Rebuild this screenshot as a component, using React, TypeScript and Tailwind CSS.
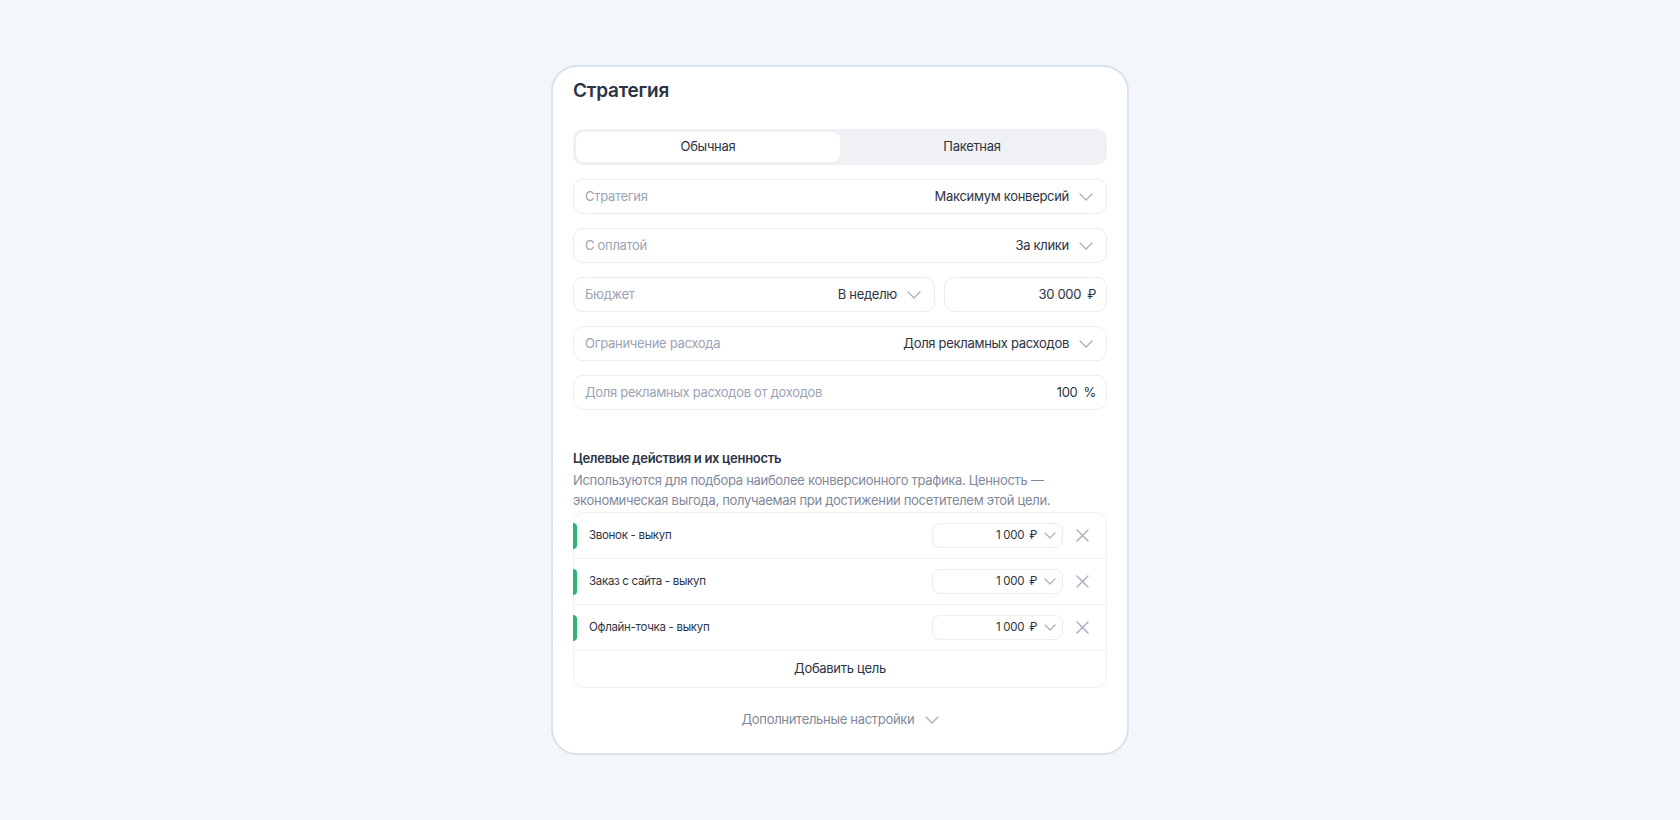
import React from "react";

function Chevron({ className = "" }: { className?: string }) {
  return (
    <svg className={className} width="14" height="8" viewBox="0 0 14 8" fill="none">
      <path d="M1 1l6 6 6-6" stroke="#a6aebd" strokeWidth="1.3" strokeLinecap="round" strokeLinejoin="round" />
    </svg>
  );
}

function SmallChevron() {
  return (
    <svg width="12" height="7" viewBox="0 0 12 7" fill="none">
      <path d="M1 1l5 5 5-5" stroke="#a6aebd" strokeWidth="1.2" strokeLinecap="round" strokeLinejoin="round" />
    </svg>
  );
}

function Cross() {
  return (
    <svg width="13" height="13" viewBox="0 0 13 13" fill="none">
      <path d="M1 1l11 11M12 1L1 12" stroke="#a4abba" strokeWidth="1.4" strokeLinecap="round" />
    </svg>
  );
}

function SelectField({ label, value }: { label: string; value: string }) {
  return (
    <div className="flex h-[35px] items-center justify-between rounded-[10px] border border-[#e9ecf1] pl-[11px] pr-[13px]">
      <span className="text-[13px] text-[#9ba3b4]">{label}</span>
      <span className="flex items-center gap-[10px] text-[13px] text-[#2c3344]">
        {value}
        <Chevron />
      </span>
    </div>
  );
}

function GoalRow({ name }: { name: string }) {
  return (
    <div className="flex h-[46px] items-center border-b border-[#f0f2f5] pr-[17px]">
      <div className="-ml-px h-[26px] w-[4px] rounded-r-full bg-[#2bb673]" />
      <span className="ml-[12px] flex-1 text-[11.5px] text-[#2c3344]">{name}</span>
      <div className="flex h-[25px] w-[131px] items-center justify-end rounded-[8px] border border-[#e9ecf1] pr-[6px]">
        <span className="text-[11.5px] text-[#2c3344]">1 000</span>
        <span className="ml-[5px] text-[11.5px] text-[#2c3344]">₽</span>
        <span className="ml-[7px] flex items-center">
          <SmallChevron />
        </span>
      </div>
      <div className="ml-[13px] flex items-center">
        <Cross />
      </div>
    </div>
  );
}

export default function App() {
  return (
    <div className="flex h-screen w-full items-center justify-center bg-[#f4f7fa] font-['Inter',sans-serif] tracking-[-0.3px]">
      <div className="flex w-[578px] flex-col rounded-[26px] border-2 border-[#dce2ed] bg-white px-5 pb-[23px] pt-[10px]">
        <h1 className="text-[19px] font-semibold leading-[28px] tracking-[-0.2px] text-[#2c3344]">Стратегия</h1>

        <div className="mt-[24px] grid h-[36px] grid-cols-2 rounded-[10px] bg-[#eff1f5] p-[3px]">
          <div className="flex items-center justify-center rounded-[8px] bg-white text-[13px] text-[#2c3344]">
            Обычная
          </div>
          <div className="flex items-center justify-center text-[13px] text-[#2c3344]">Пакетная</div>
        </div>

        <div className="mt-[14px] flex flex-col gap-[14px]">
          <SelectField label="Стратегия" value="Максимум конверсий" />
          <SelectField label="С оплатой" value="За клики" />
          <div className="flex gap-[9px]">
            <div className="flex-1">
              <SelectField label="Бюджет" value="В неделю" />
            </div>
            <div className="flex h-[35px] w-[163px] items-center justify-end rounded-[10px] border border-[#e9ecf1] pr-[10px] text-[13px] text-[#2c3344]">
              <span>30 000</span>
              <span className="ml-[6px]">₽</span>
            </div>
          </div>
          <SelectField label="Ограничение расхода" value="Доля рекламных расходов" />
          <div className="flex h-[35px] items-center justify-between rounded-[10px] border border-[#e9ecf1] pl-[11px] pr-[10px]">
            <span className="text-[13px] text-[#9ba3b4]">Доля рекламных расходов от доходов</span>
            <span className="flex items-center text-[13px] text-[#2c3344]">
              <span>100</span>
              <span className="ml-[6px]">%</span>
            </span>
          </div>
        </div>

        <div className="mt-[38px] text-[13px] font-semibold leading-[20px] text-[#2c3344]">
          Целевые действия и их ценность
        </div>
        <p className="mt-[2px] text-[13px] leading-[20px] text-[#7f889b]">
          Используются для подбора наиболее конверсионного трафика. Ценность —
          <br />
          экономическая выгода, получаемая при достижении посетителем этой цели.
        </p>

        <div className="mt-[2px] flex flex-col rounded-[12px] border border-[#eef0f3]">
          <GoalRow name="Звонок - выкуп" />
          <GoalRow name="Заказ с сайта - выкуп" />
          <GoalRow name="Офлайн-точка - выкуп" />
          <div className="flex h-[36px] items-center justify-center text-[13px] text-[#2c3344]">Добавить цель</div>
        </div>

        <div className="mt-[22px] flex h-[20px] items-center justify-center gap-[10px] text-[13px] text-[#7f889b]">
          <span>Дополнительные настройки</span>
          <Chevron />
        </div>
      </div>
    </div>
  );
}
